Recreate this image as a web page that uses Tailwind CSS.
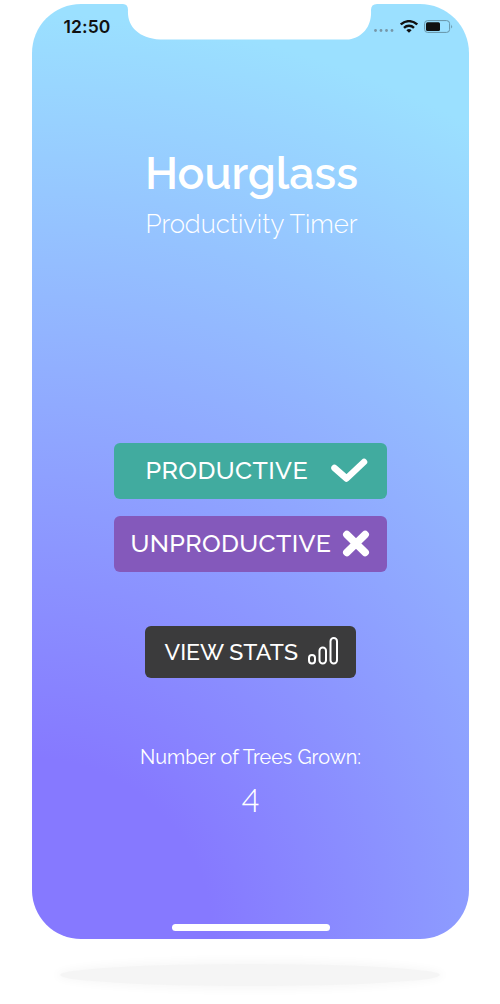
<!DOCTYPE html>
<html lang="en">
<head>
<meta charset="utf-8">
<title>Hourglass</title>
<script src="https://cdn.jsdelivr.net/npm/@tailwindcss/browser@4"></script>
</head>
<body class="bg-white w-[500px] h-[1004px] overflow-hidden flex flex-col items-center pt-1 font-['Raleway','Lato',sans-serif] text-white">
  <main class="relative w-[437px] h-[934.5px] rounded-[49px] flex flex-col items-center bg-[radial-gradient(circle_at_0%_100%,#8679ff_180px,#9be0ff_925px)]">
    <svg class="absolute left-[91.5px] -top-px w-[254px] h-[37px]" viewBox="0 0 254 37" fill="#fff"><path d="M0 0H254V1Q248 1 248 7C249 23 240 34 226 36.5H37C15 35 4 23 5 7Q5 1 0 1Z"/></svg>
    <header class="w-full h-[46px] pl-8 pr-4 flex items-center justify-between text-[#111]">
      <time class="font-['Inter',sans-serif] font-semibold text-[17.5px] tracking-[0.1px] leading-none">12:50</time>
      <div class="flex items-center">
        <svg class="w-5 h-3 mr-[6px]" viewBox="0 0 20 12" fill="#7797a9"><circle cx="1.5" cy="9.5" r="1.4"/><circle cx="7" cy="9.5" r="1.4"/><circle cx="12.5" cy="9.5" r="1.4"/><circle cx="18" cy="9.5" r="1.4"/></svg>
        <svg class="w-[18px] h-[13px] mr-[6px] -mt-[2px]" viewBox="0 0 18 13" fill="none" stroke="#111" stroke-width="2.4"><path d="M.8 4.5C5.5 0 12.5 0 17.2 4.5M4 7.8C6.8 5.1 11.2 5.1 14 7.8"/><path d="M6.4 10.2Q9 8 11.6 10.2L9 12.8Z" fill="#111" stroke="none"/></svg>
        <svg class="w-[29px] h-[13px] -mt-[2px]" viewBox="0 0 29 13"><rect x=".6" y=".6" width="25" height="11.8" rx="3" fill="none" stroke="#6793a6"/><rect x="2" y="2.2" width="14" height="8.8" rx="1.5" fill="#111"/><path d="M27.2 4.5V8.5Q29 6.5 27.2 4.5Z" fill="#6793a6"/></svg>
      </div>
    </header>
    <h1 class="mt-[96px] h-[54px] ml-[3px] font-semibold text-[44.5px] leading-[54px] whitespace-nowrap">Hourglass</h1>
    <p class="mt-[8px] ml-[3px] h-8 font-light text-[25.7px] leading-8 whitespace-nowrap">Productivity Timer</p>
    <section class="mt-[203px] w-[273px] flex flex-col gap-[17px]">
      <button class="h-[56px] rounded-md bg-[#41ab9f] pl-8 pr-[19px] flex items-center justify-between font-medium text-[25px] leading-none whitespace-nowrap"><span class="tracking-[0.4px] -mt-px">PRODUCTIVE</span>
        <svg class="w-[38px] h-[25px] -mt-[2px]" viewBox="0 0 38 25" fill="none" stroke="#fff" stroke-width="6.5" stroke-linecap="round" stroke-linejoin="round"><path d="M4.5 10L16.5 20.5L34 4"/></svg>
      </button>
      <button class="h-[56px] rounded-md bg-[#8459bb] pl-[17px] pr-[17px] flex items-center justify-between font-medium text-[25px] leading-none whitespace-nowrap"><span class="tracking-[0.35px] -mt-px">UNPRODUCTIVE</span>
        <svg class="w-7 h-[27px] -mt-px" viewBox="0 0 28 27" fill="none" stroke="#fff" stroke-width="7.5" stroke-linecap="round"><path d="M4.8 4.5L23.2 22.5M23.2 4.5L4.8 22.5"/></svg>
      </button>
    </section>
    <button class="mt-[54px] w-[211px] h-[52px] rounded-md bg-[#3b3b3c] pl-5 pr-[17px] flex items-center justify-between font-medium text-[23px] leading-none whitespace-nowrap"><span class="-mt-[2px]">VIEW STATS</span>
      <svg class="w-8 h-7 -mt-[2px]" viewBox="0 0 32 28" fill="none" stroke="#fff" stroke-width="2"><rect x="2" y="18" width="6" height="8.5" rx="3"/><rect x="12.5" y="10.5" width="6.5" height="16" rx="3.2"/><rect x="23.5" y="1" width="6.5" height="25.5" rx="3.2"/></svg>
    </button>
    <p class="mt-[67px] h-6 ml-px text-[19.8px] leading-6 whitespace-nowrap">Number of Trees Grown:</p>
    <p class="mt-[14px] h-9 ml-px font-light text-[32px] leading-9 [font-feature-settings:'lnum'_1]">4</p>
    <div class="mt-auto mb-2 ml-px w-[158px] h-[6.5px] rounded-full bg-white"></div>
  </main>
  <div class="mt-[25px] w-[380px] h-[22px] rounded-[50%] bg-[#f5f5f5] shadow-[0_0_8px_4px_#f8f8f8]"></div>
</body>
</html>
